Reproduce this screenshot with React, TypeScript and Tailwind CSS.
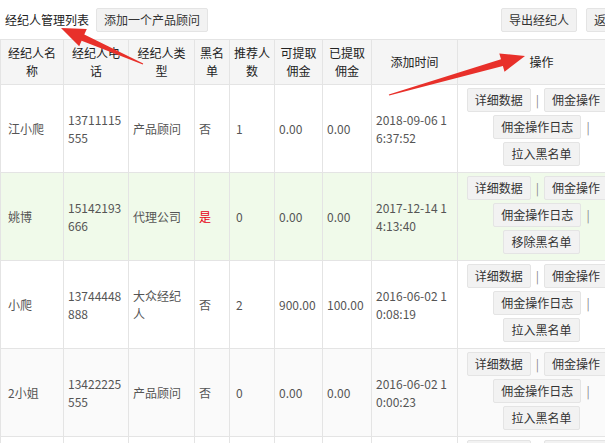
import React from "react";

type Row = {
  name: string;
  phone: [string, string];
  type: string;
  black: boolean;
  rec: string;
  can: string;
  done: string;
  time: [string, string];
  bg: string;
};

const rows: Row[] = [
  { name: "江小爬", phone: ["13711115", "555"], type: "产品顾问", black: false, rec: "1", can: "0.00", done: "0.00", time: ["2018-09-06 1", "6:37:52"], bg: "bg-white" },
  { name: "姚博", phone: ["15142193", "666"], type: "代理公司", black: true, rec: "0", can: "0.00", done: "0.00", time: ["2017-12-14 1", "4:13:40"], bg: "bg-[#f0faea]" },
  { name: "小爬", phone: ["13744448", "888"], type: "大众经纪人", black: false, rec: "2", can: "900.00", done: "100.00", time: ["2016-06-02 1", "0:08:19"], bg: "bg-white" },
  { name: "2小姐", phone: ["13422225", "555"], type: "产品顾问", black: false, rec: "0", can: "0.00", done: "0.00", time: ["2016-06-02 1", "0:00:23"], bg: "bg-[#fafafa]" },
  { name: "小明", phone: ["13800138", "000"], type: "产品顾问", black: false, rec: "0", can: "0.00", done: "0.00", time: ["2016-05-30 1", "1:20:05"], bg: "bg-white" },
];

function Btn({ children }: { children: React.ReactNode }) {
  return (
    <span className="inline-flex h-[24px] items-center whitespace-nowrap rounded-[2px] border border-[#e4e4e4] bg-[#f2f2f2] px-[7px] leading-[22px] text-[#333]">
      {children}
    </span>
  );
}

function Sep({ trailing }: { trailing?: boolean }) {
  return (
    <span className={trailing ? "ml-[5px] text-[#888] leading-[24px]" : "mx-[5px] text-[#888] leading-[24px]"}>|</span>
  );
}

function arrowPoints(tx: number, ty: number, hx: number, hy: number) {
  const dx = hx - tx;
  const dy = hy - ty;
  const len = Math.sqrt(dx * dx + dy * dy);
  const ux = dx / len;
  const uy = dy / len;
  const nx = -uy;
  const ny = ux;
  const headLen = 24;
  const bx = hx - ux * headLen;
  const by = hy - uy * headLen;
  const pts: [number, number][] = [
    [tx + nx * 0.6, ty + ny * 0.6],
    [bx + nx * 3.4, by + ny * 3.4],
    [bx + nx * 9.5, by + ny * 9.5],
    [hx, hy],
    [bx - nx * 9.5, by - ny * 9.5],
    [bx - nx * 3.4, by - ny * 3.4],
    [tx - nx * 0.6, ty - ny * 0.6],
  ];
  return pts.map((p) => `${p[0].toFixed(1)},${p[1].toFixed(1)}`).join(" ");
}

export default function App() {
  const th = "border border-[#e4e4e4] bg-[#f5f5f5] px-[4px] py-[4px] text-center font-normal leading-[18px] text-[#222]";
  const td = "border border-[#e4e4e4] px-[4px] align-middle leading-[18px] text-[#555]";
  return (
    <div
      className="relative h-[443px] w-[605px] overflow-hidden bg-white text-[12px]"
      style={{ fontFamily: '"Noto Sans CJK SC", "Noto Sans", sans-serif' }}
    >
      <div className="w-[634px]">
        <div className="flex h-[39px] items-center pl-[5px] pr-[8px]">
          <span className="text-[#222]">经纪人管理列表</span>
          <span className="ml-[7px]">
            <Btn>添加一个产品顾问</Btn>
          </span>
          <div className="ml-auto flex gap-[9px]">
            <Btn>导出经纪人</Btn>
            <Btn>返回</Btn>
          </div>
        </div>
        <table className="w-[625px] table-fixed border-collapse">
          <colgroup>
            <col className="w-[63px]" />
            <col className="w-[65px]" />
            <col className="w-[66px]" />
            <col className="w-[35px]" />
            <col className="w-[45px]" />
            <col className="w-[48px]" />
            <col className="w-[49px]" />
            <col className="w-[86px]" />
            <col className="w-[168px]" />
          </colgroup>
          <thead>
            <tr>
              <th className={th}>经纪人名称</th>
              <th className={th}>经纪人电话</th>
              <th className={th}>经纪人类型</th>
              <th className={th}>黑名单</th>
              <th className={th}>推荐人数</th>
              <th className={th}>可提取佣金</th>
              <th className={th}>已提取佣金</th>
              <th className={th}>添加时间</th>
              <th className={th}>操作</th>
            </tr>
          </thead>
          <tbody>
            {rows.map((r, i) => (
              <tr key={i} className={r.bg}>
                <td className={td + " pl-[7px]"}>{r.name}</td>
                <td className={td}>
                  <div>{r.phone[0]}</div>
                  <div>{r.phone[1]}</div>
                </td>
                <td className={td}>{r.type}</td>
                <td className={td}>
                  {r.black ? <span className="text-[#e60012]">是</span> : "否"}
                </td>
                <td className={td + " pl-[6px]"}>{r.rec}</td>
                <td className={td}>{r.can}</td>
                <td className={td}>{r.done}</td>
                <td className={td}>
                  <div className="whitespace-nowrap">{r.time[0]}</div>
                  <div className="whitespace-nowrap">{r.time[1]}</div>
                </td>
                <td className="border border-[#e4e4e4] px-[4px] pb-[6px] pt-[3px] align-top">
                  <div className="flex flex-col items-center gap-[3px]">
                    <div className="flex items-center">
                      <Btn>详细数据</Btn>
                      <Sep />
                      <Btn>佣金操作</Btn>
                      <Sep trailing />
                    </div>
                    <div className="flex items-center">
                      <Btn>佣金操作日志</Btn>
                      <Sep trailing />
                    </div>
                    <div className="flex items-center">
                      <Btn>{r.black ? "移除黑名单" : "拉入黑名单"}</Btn>
                    </div>
                  </div>
                </td>
              </tr>
            ))}
          </tbody>
        </table>
      </div>
      <svg className="pointer-events-none absolute left-0 top-0" width="605" height="443">
        <polygon points={arrowPoints(143, 64, 61, 28)} fill="#e8302a" />
        <polygon points={arrowPoints(389, 95, 525, 56)} fill="#e8302a" />
      </svg>
    </div>
  );
}
